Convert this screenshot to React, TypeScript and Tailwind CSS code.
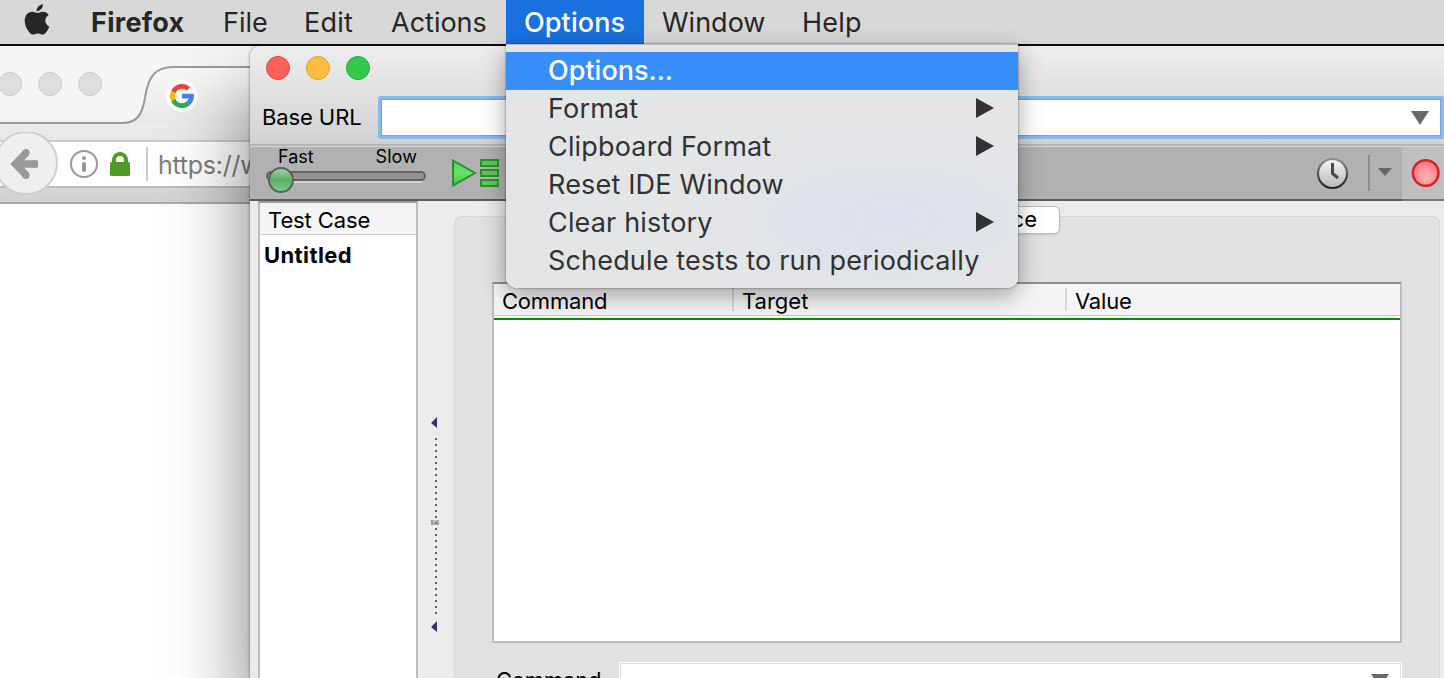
import React from "react";

function AppleLogo() {
  return (
    <svg className="h-[32px] w-[26px]" viewBox="0 0 26 32" fill="#262626">
      <path d="M18.8 0.2c.2 1.900-.5 3.600-1.600 4.900-1.100 1.300-2.800 2.200-4.500 2.100-.2-1.800.6-3.600 1.600-4.700C15.400 1.200 17.300.3 18.800.2z" />
      <path d="M24.700 10.900c-.3.2-3.400 2-3.400 5.700 0 4.400 3.900 5.900 4 6-.1.200-.6 2.200-2.100 4.200-1.200 1.800-2.500 3.700-4.500 3.700-2 0-2.500-1.100-4.800-1.100-2.200 0-3.100 1.200-4.900 1.200-1.900 0-3.200-1.800-4.600-3.700C2.600 24.500.7 20.600.7 16.900.7 10.900 4.600 7.800 8.400 7.800c2 0 3.700 1.300 4.900 1.300 1.200 0 3.100-1.400 5.500-1.400.9 0 4 .1 5.900 3.200z" />
    </svg>
  );
}

function GoogleLogo() {
  return (
    <svg className="size-[24px]" viewBox="4 4 40 40">
      <path fill="#FBBC05" d="M6.306 14.691l6.571 4.819a12 12 0 0 0-.16 8.544l-6.522 5.025A20 20 0 0 1 6.306 14.691z" />
      <path fill="#EA4335" d="M6.306 14.691l6.571 4.819C14.655 15.108 18.961 12 24 12c3.059 0 5.842 1.154 7.961 3.039l5.657-5.657C34.046 6.053 29.268 4 24 4 16.318 4 9.656 8.337 6.306 14.691z" />
      <path fill="#34A853" d="M24 44c5.166 0 9.860-1.977 13.409-5.192l-6.190-5.238C29.211 35.091 26.715 36 24 36c-5.202 0-9.619-3.317-11.283-7.946l-6.522 5.025C9.505 39.556 16.227 44 24 44z" />
      <path fill="#4285F4" d="M43.611 20.083H24V28h11.303c-.792 2.237-2.231 4.166-4.087 5.571l6.193 5.238C41 35.500 44 30.500 44 24c0-1.341-.138-2.650-.389-3.917z" />
    </svg>
  );
}

function MenuBar() {
  return (
    <header className="relative z-10 flex h-[46px] w-full border-b-2 border-[#0b0b0f] bg-[#d8d8d8] text-[27px] leading-[45px] whitespace-nowrap text-[#262626]">
      <div className="w-[91px] pt-[4px] pl-[24px]"><AppleLogo /></div>
      <div className="w-[132px] font-bold tracking-[0.3px]">Firefox</div>
      <div className="w-[81px]">File</div>
      <div className="w-[87px] tracking-[0.2px]">Edit</div>
      <div className="w-[115px]">Actions</div>
      <div className="h-[44px] w-[138px] bg-[#1a70de] pl-[18px] font-medium tracking-[0.1px] text-white">Options</div>
      <div className="w-[158px] pl-[18px]">Window</div>
      <div className="tracking-[0.2px]">Help</div>
    </header>
  );
}

function BrowserWindow() {
  return (
    <section className="absolute top-[46px] left-0 flex h-[632px] w-[260px] flex-col overflow-hidden bg-white">
      <div className="relative h-[78px] bg-[#f5f5f5]">
        <svg className="h-[78px] w-[260px]" viewBox="0 0 260 78">
          <defs>
            <linearGradient id="tab" x1="0" y1="0" x2="0" y2="1">
              <stop offset="0" stopColor="#f8f8f8" />
              <stop offset="1" stopColor="#e8e8e8" />
            </linearGradient>
          </defs>
          <path d="M0 78H122C136 76 142 70 145 52C148 30 156 22 172 21H260V78Z" fill="url(#tab)" />
          <path d="M0 77H122C136 77 142 70 145 52C148 30 156 21 173 21H260" fill="none" stroke="#999" strokeWidth="2" />
          {[10, 50, 90].map((x) => (
            <circle key={x} cx={x} cy="38" r="11.500" fill="#dedede" stroke="#cbcbcb" />
          ))}
          <circle cx="182" cy="50" r="16" fill="#fcfcfc" />
        </svg>
        <div className="absolute top-[38px] left-[170px]"><GoogleLogo /></div>
      </div>
      <div className="relative flex h-[80px] items-center border-b-2 border-[#ababab] bg-linear-to-b from-[#ebebeb] to-[#d2d2d2] pt-[2px]">
        <div className="flex h-[48px] w-full items-center border-y-2 border-t-[#cccccc] border-b-[#bcbcbc] bg-white pl-[70px]">
          <svg className="size-[28px] shrink-0" viewBox="0 0 28 28">
            <circle cx="14" cy="14" r="13" fill="none" stroke="#999" strokeWidth="2" />
            <circle cx="14" cy="8" r="2.100" fill="#999" />
            <rect x="12" y="12" width="4" height="10" rx="1.800" fill="#999" />
          </svg>
          <svg className="ml-[12px] h-[24px] w-[20px] shrink-0" viewBox="0 0 20 24">
            <path d="M4 12V8a6 6 0 0 1 12 0v4" fill="none" stroke="#4d9a26" strokeWidth="4" />
            <rect y="10" width="20" height="14" rx="1.500" fill="#4d9a26" />
          </svg>
          <div className="ml-[16px] h-[34px] w-[2px] shrink-0 bg-[#d0d0d0]" />
          <div className="ml-[10px] pt-[3px] text-[25px] tracking-[-0.25px] whitespace-nowrap text-[#7d7d7d]">https://w</div>
        </div>
        <svg className="absolute top-[8px] left-[-6px] size-[64px]" viewBox="0 0 64 64">
          <circle cx="32" cy="31" r="31" fill="#efefef" stroke="#cfcfcf" strokeWidth="2" />
          <path d="M32.500 20.500L21.500 32L32.500 43.500M22 32H42.500" fill="none" stroke="#9a9a9a" strokeWidth="7.500" strokeLinecap="butt" />
          <circle cx="32" cy="20.500" r="3.600" fill="#9a9a9a" />
          <circle cx="32" cy="43.500" r="3.600" fill="#9a9a9a" />
          <rect x="38" y="28.250" width="6" height="7.500" rx="1.500" fill="#9a9a9a" />
        </svg>
      </div>
      <div className="flex-1 bg-white" />
    </section>
  );
}

function UrlRow() {
  return (
    <div className="flex h-[98px] flex-col bg-linear-to-b from-[#ededed] to-[#d3d3d3]">
      <div className="flex h-[50px] gap-[16px] pt-[10px] pl-[16px]">
        <span className="size-[24px] rounded-full border border-[#e2463f] bg-[#fd605b]" />
        <span className="size-[24px] rounded-full border border-[#dfa033] bg-[#fdbd40]" />
        <span className="size-[24px] rounded-full border border-[#1dac30] bg-[#34c84a]" />
      </div>
      <div className="flex h-[43px] items-center pl-[12px]">
        <div className="w-[116px] pb-[1px] text-[22px] tracking-[-0.1px]">Base URL</div>
        <div className="flex h-[43px] flex-1 rounded-[3px] bg-[#87b9ef] p-[3px]">
          <div className="flex flex-1 items-center justify-end border border-[#6fa5df] bg-white pr-[10px] pb-[1px]">
            <svg className="h-[15px] w-[20px]" viewBox="0 0 20 15"><path d="M1 1H19L10 15Z" fill="#696969" /></svg>
          </div>
        </div>
      </div>
    </div>
  );
}

function RunIcon() {
  return (
    <svg className="h-[30px] w-[48px]" viewBox="0 0 48 30">
      <defs>
        <linearGradient id="green" x1="0" y1="0" x2="0" y2="1">
          <stop offset="0" stopColor="#53cf55" /><stop offset=".5" stopColor="#6be36a" /><stop offset="1" stopColor="#3fba43" />
        </linearGradient>
      </defs>
      <path d="M2 2.500L24 15L2 27.500Z" fill="url(#green)" stroke="#2c902f" strokeWidth="2" />
      {[2, 12, 22].map((y) => (
        <rect key={y} x="30" y={y} width="17" height="6" fill="#55cb55" stroke="#2c902f" strokeWidth="2" />
      ))}
    </svg>
  );
}

function ToolStrip() {
  return (
    <div className="flex h-[57px] border-t-2 border-[#b5b5b5] bg-[#d3d3d3] pt-[1px]">
      <div className="flex flex-1 border-b-2 border-[#5b5b5b] bg-[#b1b1b1]">
        <div className="w-[186px] pl-[16px]">
          <div className="flex h-[19px] justify-between pr-[19px] pl-[12px] text-[18px] leading-[19px]">
            <span>Fast</span><span className="tracking-[0.1px]">Slow</span>
          </div>
          <svg className="block h-[30px] w-[162px]" viewBox="0 0 162 30">
            <defs>
              <linearGradient id="knob" x1="0" y1="0" x2="0" y2="1">
                <stop offset="0" stopColor="#9ad7a3" /><stop offset=".5" stopColor="#5fad6b" /><stop offset="1" stopColor="#75ce80" />
              </linearGradient>
            </defs>
            <path d="M6 16H156" stroke="#d4d4d4" strokeWidth="2" />
            <rect x="1" y="6" width="158" height="8" rx="4" fill="#929292" stroke="#626262" strokeWidth="2" />
            <circle cx="15" cy="14" r="12" fill="url(#knob)" stroke="#595f59" strokeWidth="2" />
          </svg>
        </div>
        <div className="pt-[11px] pl-[15px]"><RunIcon /></div>
        <div className="ml-auto flex items-center pr-[10px]">
          <svg className="mr-[19px] size-[33px]" viewBox="0 0 33 33">
            <defs>
              <linearGradient id="rim" x1="0" y1="0" x2="0" y2="1">
                <stop offset="0" stopColor="#8b8b8b" /><stop offset="1" stopColor="#222" />
              </linearGradient>
              <linearGradient id="dial" x1="0" y1="0" x2="0" y2="1">
                <stop offset="0" stopColor="#f6f6f6" /><stop offset="1" stopColor="#b6b6b6" />
              </linearGradient>
            </defs>
            <circle cx="16.500" cy="16.500" r="14.500" fill="url(#dial)" stroke="url(#rim)" strokeWidth="2.200" />
            <path d="M16.500 6V16.500L22 21" fill="none" stroke="#4a4a4a" strokeWidth="3" />
          </svg>
          <div className="h-[36px] w-[2px] bg-[#8c8c8c]" />
          <svg className="mb-[2px] ml-[8px] h-[8px] w-[14px]" viewBox="0 0 14 8"><path d="M0 0H14L7 8Z" fill="#666" /></svg>
        </div>
      </div>
      <div className="flex w-[42px] items-center border-b-2 border-[#777] bg-[#bfbfbf] pl-[9px]">
        <svg className="size-[30px]" viewBox="0 0 30 30">
          <defs>
            <radialGradient id="rec" cx=".5" cy=".65" r=".55">
              <stop offset="0" stopColor="#ffb3b3" /><stop offset="1" stopColor="#ff8086" />
            </radialGradient>
          </defs>
          <circle cx="14.700" cy="15" r="12.800" fill="url(#rec)" stroke="#df1c25" strokeWidth="2.500" />
        </svg>
      </div>
    </div>
  );
}

function Splitter() {
  const dots = Array.from({ length: 30 }, (_, i) => 38 + i * 6);
  return (
    <svg className="mt-[199px] h-[278px] w-[36px] shrink-0" viewBox="0 0 36 278">
      <path d="M19 17V28L13 23ZM19 221V232L13 227Z" fill="#34346b" />
      {dots.map((y) => (
        <g key={y}>
          <rect x="15" y={y - 2} width="2" height="2" fill="#fafafa" />
          <rect x="17" y={y} width="2" height="2" fill="#5c5a8c" />
        </g>
      ))}
      <rect x="13" y="120" width="8" height="5" fill="#888" fillOpacity=".5" />
      <rect x="13" y="120" width="2" height="5" fill="#777" fillOpacity=".5" />
      <rect x="19" y="120" width="2" height="5" fill="#777" fillOpacity=".3" />
    </svg>
  );
}

function EditorPanel() {
  return (
    <div className="mt-[15px] mr-[4px] flex flex-1 flex-col rounded-t-[8px] border border-b-0 border-[#d5d5d5] bg-[#e1e1e1] pr-[37px] pl-[37px]">
      <div className="flex h-[65px]">
        <div className="mt-[-11px] ml-[354px] flex h-[28px] w-[214px] items-center justify-end rounded-[6px] border border-[#bdbdbd] bg-white pr-[22px] pb-[2px] text-[22px] shadow-sm">Source</div>
      </div>
      <div className="h-[361px] border-2 border-[#bdbdbd] border-t-[#8d8d8d] bg-white">
        <div className="flex h-[32px] border-b border-[#c8c8c8] bg-[#f5f5f5] text-[22px] leading-[35px] tracking-[-0.2px]">
          <div className="w-[238px] pl-[8px]">Command</div>
          <div className="mt-[4px] h-[23px] w-[2px] bg-[#d8d8d8]" />
          <div className="w-[331px] pl-[8px] tracking-normal">Target</div>
          <div className="mt-[4px] h-[23px] w-[2px] bg-[#d8d8d8]" />
          <div className="pl-[8px]">Value</div>
        </div>
        <div className="mt-[2px] h-[2px] bg-[#078a07]" />
      </div>
      <div className="flex h-[35px] pt-[19px]">
        <div className="w-[127px] shrink-0 pl-[4px] text-[22px] leading-[36px] tracking-[-0.2px]">Command</div>
        <div className="flex h-[40px] flex-1 border border-white bg-[#ddd] p-[1px]">
          <div className="flex flex-1 justify-end bg-white pt-[9px] pr-[10px]">
            <svg className="h-[15px] w-[20px]" viewBox="0 0 20 15"><path d="M1 1H19L10 15Z" fill="#696969" /></svg>
          </div>
        </div>
      </div>
    </div>
  );
}

function IdeWindow() {
  return (
    <section className="absolute top-[46px] left-[250px] flex h-[632px] w-[1194px] flex-col overflow-hidden rounded-tl-[10px] bg-[#ebebeb] text-black shadow-[0_0_3px_rgba(0,0,0,0.5),0_50px_80px_rgba(0,0,0,0.5)]">
      <UrlRow />
      <ToolStrip />
      <div className="flex min-h-0 flex-1 pl-[8px]">
        <div className="flex w-[160px] shrink-0 flex-col border-x-2 border-t-2 border-[#bcbcbc] border-t-[#999] bg-white text-[22px]">
          <div className="h-[32px] border-b border-[#c8c8c8] bg-[#f5f5f5] pl-[8px] leading-[34px] tracking-[-0.1px]">Test Case</div>
          <div className="pl-[4px] leading-[40px] font-bold tracking-[0.4px]">Untitled</div>
        </div>
        <Splitter />
        <EditorPanel />
      </div>
    </section>
  );
}

const menuItems = [
  { label: "Options...", active: true },
  { label: "Format", submenu: true },
  { label: "Clipboard Format", submenu: true },
  { label: "Reset IDE Window" },
  { label: "Clear history", submenu: true },
  { label: "Schedule tests to run periodically" },
];

function OptionsMenu() {
  return (
    <div className="absolute top-[44px] left-[506px] z-20 h-[244px] w-[512px] rounded-b-[10px] border-t border-[#b9bcc0] bg-[#e4e5e7] bg-[radial-gradient(ellipse_at_75%_72%,#dbe1eb_0%,#e4e5e7_38%)] pt-[7px] shadow-[0_8px_24px_rgba(0,0,0,0.35),0_0_2px_rgba(0,0,0,0.6)]">
      {menuItems.map((item) => (
        <div
          key={item.label}
          className={
            item.active
              ? "flex h-[38px] items-center bg-[#388ef9] pl-[42px] text-[27px] font-medium text-white"
              : "flex h-[38px] items-center pl-[42px] text-[27px] tracking-[0.17px] text-[#303234]"
          }
        >
          <span className="whitespace-nowrap">{item.label}</span>
          {item.submenu && (
            <svg className="mr-[24px] mb-[2px] ml-auto h-[20px] w-[19px]" viewBox="0 0 19 20"><path d="M1 0L19 10L1 20Z" fill="#303234" /></svg>
          )}
        </div>
      ))}
    </div>
  );
}

export default function App() {
  return (
    <main className="relative h-[678px] w-[1444px] overflow-hidden bg-white font-['Inter',sans-serif]">
      <MenuBar />
      <BrowserWindow />
      <IdeWindow />
      <OptionsMenu />
    </main>
  );
}
